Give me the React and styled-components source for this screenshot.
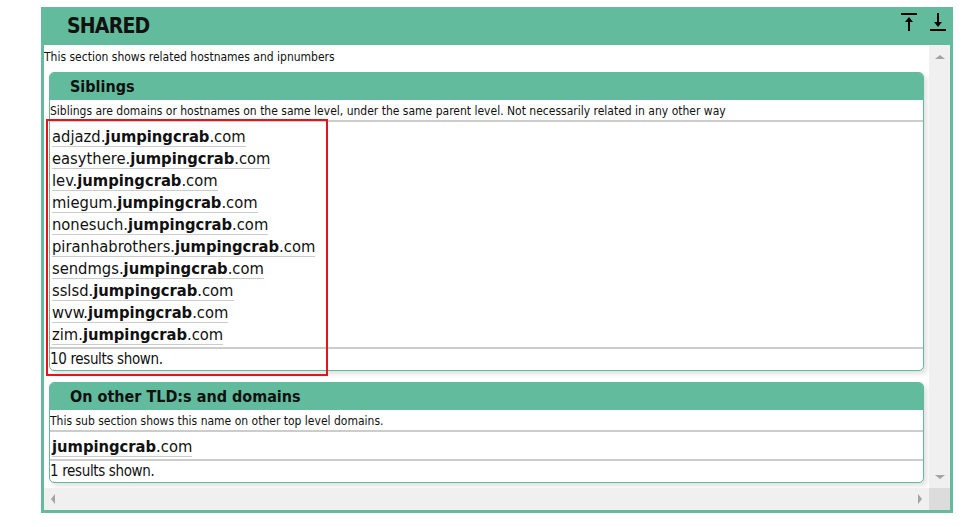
import React from "react";
import styled, { createGlobalStyle } from "styled-components";

const green = "#62bb9c";

const siblings = [
  "adjazd",
  "easythere",
  "lev",
  "miegum",
  "nonesuch",
  "piranhabrothers",
  "sendmgs",
  "sslsd",
  "wvw",
  "zim",
];

//Arrow icons in the header
function ToTop() {
  return (
    <svg width="18" height="20" viewBox="0 0 18 20">
      <rect x="1" y="1" width="16" height="2" fill="#000" />
      <rect x="8" y="6" width="2" height="13" fill="#000" />
      <path d="M5 10 L9 5 L13 10 Z" fill="#000" />
    </svg>
  );
}

function ToBottom() {
  return (
    <svg width="18" height="20" viewBox="0 0 18 20">
      <rect x="8" y="1" width="2" height="12" fill="#000" />
      <path d="M5 10 L9 15 L13 10 Z" fill="#000" />
      <rect x="1" y="17" width="16" height="2" fill="#000" />
    </svg>
  );
}

function Domain({ sub }) {
  return (
    <DomainLink href="#">
      {sub && `${sub}.`}
      <b>jumpingcrab</b>.com
    </DomainLink>
  );
}

export default function App() {
  return (
    <Page>
      <GlobalStyle />
      <Panel>
        <PanelHeader>
          <h2>SHARED</h2>
          <Tools>
            <ToTop />
            <ToBottom />
          </Tools>
        </PanelHeader>
        <PanelBody>
          <Content>
            <Intro>This section shows related hostnames and ipnumbers</Intro>
            <SubPanel>
              <SubHeader>Siblings</SubHeader>
              <Description>
                Siblings are domains or hostnames on the same level, under the
                same parent level. Not necessarily related in any other way
              </Description>
              <List>
                {siblings.map((s) => (
                  <li key={s}>
                    <Domain sub={s} />
                  </li>
                ))}
              </List>
              <Results>10 results shown.</Results>
              <Highlight />
            </SubPanel>
            <SubPanel>
              <SubHeader>On other TLD:s and domains</SubHeader>
              <Description>
                This sub section shows this name on other top level domains.
              </Description>
              <List>
                <li>
                  <Domain />
                </li>
              </List>
              <Results>1 results shown.</Results>
            </SubPanel>
          </Content>
          <VScroll>
            <Arrow dir="up" />
            <Arrow dir="down" />
          </VScroll>
          <HScroll>
            <Arrow dir="left" />
            <Arrow dir="right" />
          </HScroll>
          <Corner />
        </PanelBody>
      </Panel>
    </Page>
  );
}

//CSS
const GlobalStyle = createGlobalStyle`
  body {
    margin: 0;
    background: #ffffff;
    font-family: Tahoma, "DejaVu Sans Condensed", "DejaVu Sans", sans-serif;
    color: #111;
  }
`;

const Page = styled.div`
  padding: 7px 0 0 41px;
`;

const Panel = styled.section`
  width: 912px;
  box-sizing: border-box;
  border: 3px solid ${green};
  border-top: 0;
  background: #ffffff;
`;

const PanelHeader = styled.div`
  height: 38px;
  background: ${green};
  display: flex;
  align-items: center;
  justify-content: space-between;
  padding: 0 3px 0 23px;

  h2 {
    margin: 0;
    font-size: 21px;
    font-weight: bold;
    color: #111;
    letter-spacing: -0.8px;
  }
`;

const Tools = styled.div`
  display: flex;
  gap: 11px;
  align-self: flex-start;
  padding-top: 5px;
`;

const PanelBody = styled.div`
  display: grid;
  grid-template-columns: 885px 21px;
  grid-template-rows: 443px 22px;
`;

const Content = styled.div`
  overflow: hidden;
`;

const Intro = styled.p`
  margin: 0;
  padding-top: 4px;
  font-size: 12px;
  line-height: 16px;
`;

const SubPanel = styled.div`
  position: relative;
  margin: 7px 5px 11px 5px;
  border: 1px solid ${green};
  border-radius: 5px;
  box-shadow: 3px 3px 5px rgba(0, 0, 0, 0.12);
  background: #ffffff;
`;

const SubHeader = styled.h3`
  margin: 0;
  height: 27px;
  background: ${green};
  border-radius: 4px 4px 0 0;
  padding-left: 20px;
  font-size: 16px;
  font-weight: bold;
  line-height: 27px;
  color: #111;
`;

const Description = styled.div`
  font-size: 12px;
  line-height: 20px;
  padding-top: 1px;
  height: 19px;
  border-bottom: 2px solid #cccccc;
`;

const List = styled.ul`
  list-style: none;
  margin: 0;
  padding: 4px 0 1px 2px;
  border-bottom: 2px solid #cccccc;

  li {
    height: 22px;
    line-height: 22px;
    font-size: 16.4px;
  }
`;

const DomainLink = styled.a`
  color: #111;
  text-decoration: none;
  border-bottom: 1px solid #cccccc;
`;

const Results = styled.div`
  font-size: 15px;
  letter-spacing: -0.35px;
  line-height: 21px;
`;

const Highlight = styled.div`
  position: absolute;
  left: -4px;
  top: 46px;
  width: 282px;
  height: 257px;
  box-sizing: border-box;
  border: 2px solid #e3151c;
  pointer-events: none;
`;

const VScroll = styled.div`
  background: #f0f0f0;
  display: flex;
  flex-direction: column;
  justify-content: space-between;
  align-items: center;
  padding: 10px 0 9px;
`;

const HScroll = styled.div`
  background: #f0f0f0;
  display: flex;
  justify-content: space-between;
  align-items: center;
  padding: 0 7px 0 7px;
`;

const Corner = styled.div`
  background: #dcdcdc;
`;

const Arrow = styled.span`
  width: 0;
  height: 0;
  border: 4px solid transparent;
  ${({ dir }) =>
    dir === "up"
      ? "border-bottom-color: #a3a3a3; border-top-width: 0; border-left-width: 5px; border-right-width: 5px;"
      : dir === "down"
      ? "border-top-color: #a3a3a3; border-bottom-width: 0; border-left-width: 5px; border-right-width: 5px;"
      : dir === "left"
      ? "border-right-color: #a3a3a3; border-left-width: 0; border-top-width: 5px; border-bottom-width: 5px;"
      : "border-left-color: #a3a3a3; border-right-width: 0; border-top-width: 5px; border-bottom-width: 5px;"}
`;
